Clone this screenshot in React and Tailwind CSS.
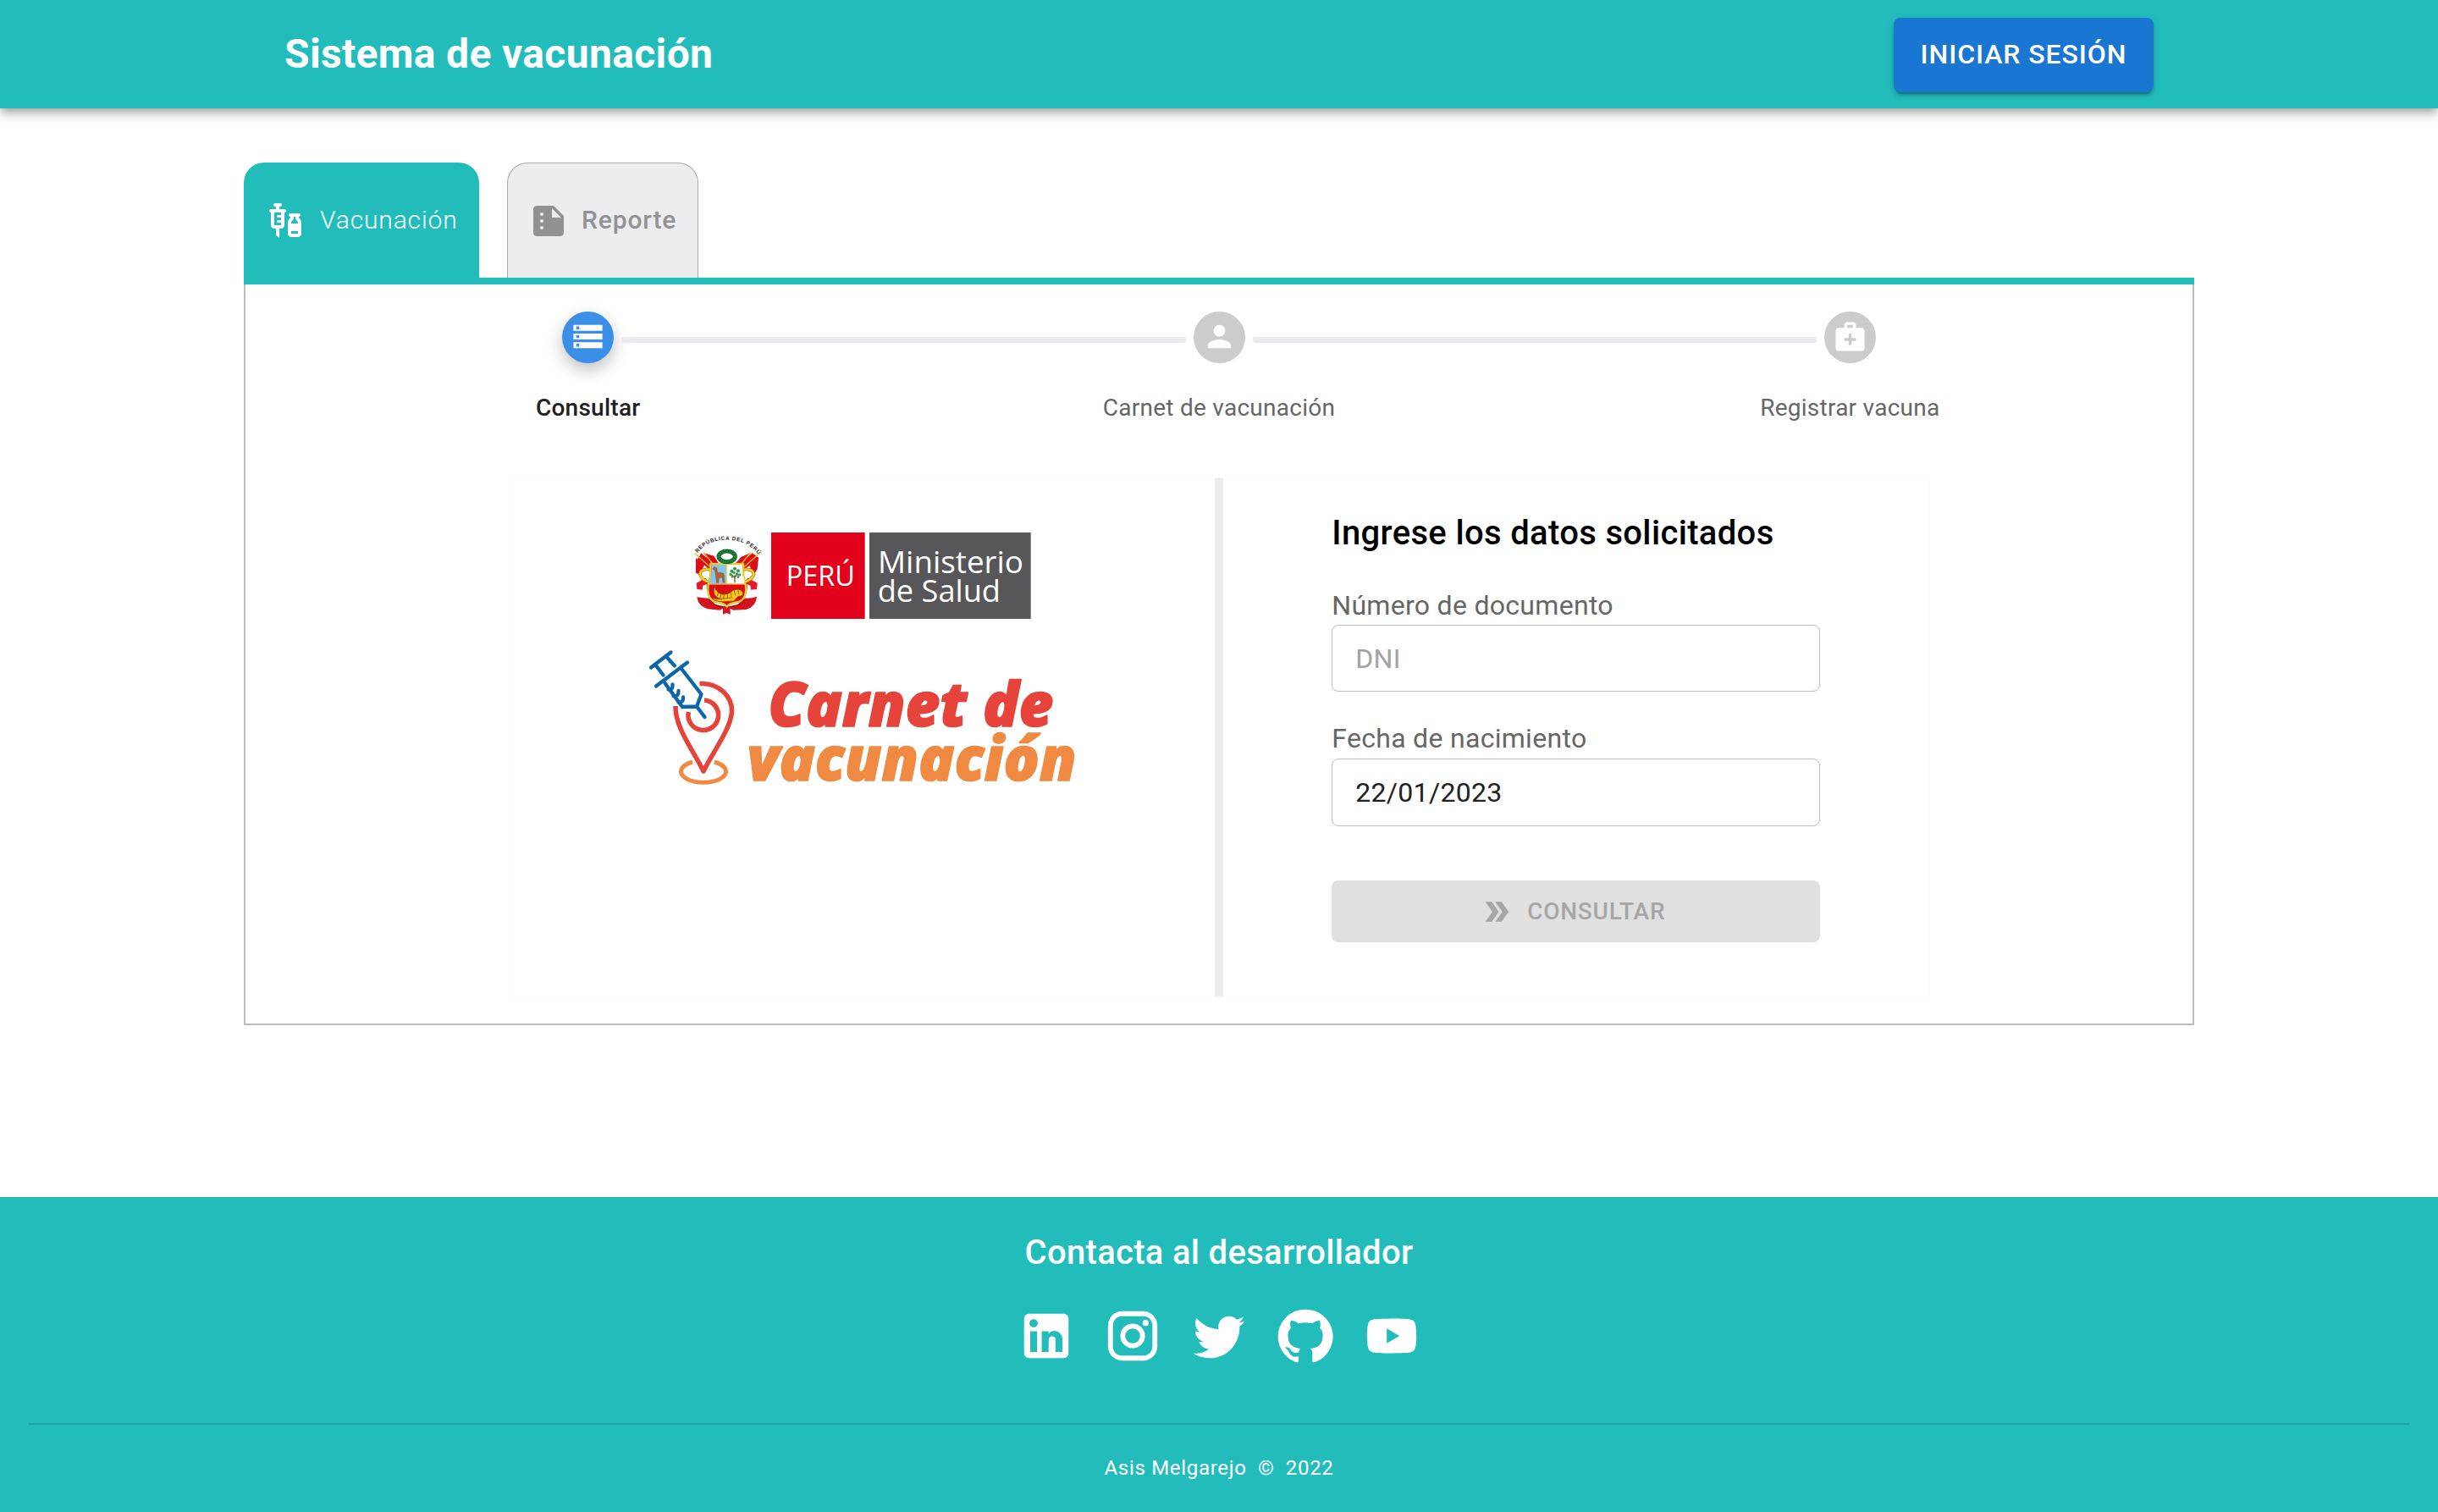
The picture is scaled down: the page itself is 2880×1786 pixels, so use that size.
import React from "react";
import { MdVaccines, MdSummarize, MdStorage, MdPerson, MdMedicalServices, MdDoubleArrow } from "react-icons/md";

const SOCIAL = [
  {
    name: "LinkedIn",
    d: "M19 3a2 2 0 0 1 2 2v14a2 2 0 0 1-2 2H5a2 2 0 0 1-2-2V5a2 2 0 0 1 2-2h14m-.5 15.5v-5.3a3.26 3.26 0 0 0-3.26-3.26c-.85 0-1.84.52-2.32 1.3v-1.11h-2.79v8.37h2.79v-4.93c0-.77.62-1.4 1.39-1.4a1.4 1.4 0 0 1 1.4 1.4v4.93h2.79M6.88 8.56a1.68 1.68 0 0 0 1.68-1.68c0-.93-.75-1.69-1.68-1.69a1.69 1.69 0 0 0-1.69 1.69c0 .93.76 1.68 1.69 1.68m1.39 9.94v-8.37H5.5v8.37h2.77z",
  },
  {
    name: "Instagram",
    d: "M7.8 2h8.4C19.4 2 22 4.6 22 7.8v8.4a5.8 5.8 0 0 1-5.8 5.8H7.8C4.6 22 2 19.4 2 16.2V7.8A5.8 5.8 0 0 1 7.8 2m-.2 2A3.6 3.6 0 0 0 4 7.6v8.8C4 18.39 5.61 20 7.6 20h8.8a3.6 3.6 0 0 0 3.6-3.6V7.6C20 5.61 18.39 4 16.4 4H7.6m9.65 1.5a1.25 1.25 0 0 1 1.25 1.25A1.25 1.25 0 0 1 17.25 8 1.25 1.25 0 0 1 16 6.75a1.25 1.25 0 0 1 1.25-1.25M12 7a5 5 0 0 1 5 5 5 5 0 0 1-5 5 5 5 0 0 1-5-5 5 5 0 0 1 5-5m0 2a3 3 0 0 0-3 3 3 3 0 0 0 3 3 3 3 0 0 0 3-3 3 3 0 0 0-3-3z",
  },
  {
    name: "Twitter",
    d: "M22.46 6c-.77.35-1.6.58-2.46.69.88-.53 1.56-1.37 1.88-2.38-.83.5-1.75.85-2.72 1.05C18.37 4.5 17.26 4 16 4c-2.35 0-4.27 1.92-4.27 4.29 0 .34.04.67.11.98C8.28 9.09 5.11 7.38 3 4.79c-.37.63-.58 1.37-.58 2.15 0 1.49.75 2.81 1.91 3.56-.71 0-1.37-.2-1.95-.5v.03c0 2.08 1.48 3.82 3.44 4.21a4.22 4.22 0 0 1-1.93.07 4.28 4.28 0 0 0 4 2.98 8.521 8.521 0 0 1-5.33 1.84c-.34 0-.68-.02-1.02-.06C3.44 20.29 5.7 21 8.12 21 16 21 20.33 14.46 20.33 8.79c0-.19 0-.37-.01-.56.84-.6 1.56-1.36 2.14-2.23z",
  },
  {
    name: "GitHub",
    d: "M12 1.27a11 11 0 00-3.48 21.46c.55.09.73-.28.73-.55v-1.84c-3.03.64-3.67-1.46-3.67-1.46-.55-1.29-1.28-1.65-1.28-1.65-.92-.65.1-.65.1-.65 1.1 0 1.73 1.1 1.73 1.1.92 1.65 2.57 1.2 3.21.92a2 2 0 01.64-1.47c-2.47-.27-5.04-1.19-5.04-5.5 0-1.1.46-2.1 1.2-2.84a3.76 3.76 0 010-2.93s.91-.28 3.11 1.1c1.8-.49 3.7-.49 5.5 0 2.1-1.38 3.02-1.1 3.02-1.1a3.76 3.76 0 01.1 2.93c.83.74 1.2 1.74 1.2 2.94 0 4.21-2.57 5.13-5.04 5.4.45.37.82.92.82 2.02v3.03c0 .27.1.64.73.55A11 11 0 0012 1.27",
  },
  {
    name: "YouTube",
    d: "M10 15l5.19-3L10 9v6m11.56-7.83c.13.47.22 1.1.28 1.9.07.8.1 1.49.1 2.09L22 12c0 2.19-.16 3.8-.44 4.83-.25.9-.83 1.48-1.73 1.73-.47.13-1.33.22-2.65.28-1.3.07-2.49.1-3.59.1L12 19c-4.19 0-6.8-.16-7.83-.44-.9-.25-1.48-.83-1.73-1.73-.13-.47-.22-1.1-.28-1.9-.07-.8-.1-1.49-.1-2.09L2 12c0-2.19.16-3.8.44-4.83.25-.9.83-1.48 1.73-1.73.47-.13 1.33-.22 2.65-.28 1.3-.07 2.49-.1 3.59-.1L12 5c4.19 0 6.8.16 7.83.44.9.25 1.48.83 1.73 1.73z",
  },
];

const STEPS = [
  { label: "Consultar", Icon: MdStorage, active: true },
  { label: "Carnet de vacunación", Icon: MdPerson },
  { label: "Registrar vacuna", Icon: MdMedicalServices },
];

function Header() {
  return (
    <header className="relative h-[128px] bg-[#22bdbb] shadow-[0_4px_8px_-2px_rgba(0,0,0,0.2),0_8px_10px_rgba(0,0,0,0.14),0_2px_20px_rgba(0,0,0,0.12)]">
      <div className="flex h-full items-center justify-between pl-[336px] pr-[336px]">
        <h1 className="text-[48px] leading-[64px] font-bold tracking-[0.35px] text-white">Sistema de vacunación</h1>
        <button className="mt-[2px] flex h-[88px] w-[307px] items-center justify-center rounded-[8px] bg-[#1976d2] pb-[3px] text-[32px] font-medium tracking-[0.91px] text-white shadow-[0_6px_2px_-4px_rgba(0,0,0,0.2),0_4px_4px_rgba(0,0,0,0.14),0_2px_10px_rgba(0,0,0,0.12)]">
          INICIAR SESIÓN
        </button>
      </div>
    </header>
  );
}

function Tabs() {
  return (
    <div className="flex h-[136px] gap-[33px] text-[30px] tracking-[0.86px]">
      <div className="flex w-[278px] items-center gap-4 rounded-t-[24px] bg-[#22bdbb] pl-[26px] font-light text-white">
        <MdVaccines className="size-12 shrink-0" />
        <span className="pb-[2px]">Vacunación</span>
      </div>
      <div className="flex w-[226px] items-center gap-[15px] rounded-t-[24px] border border-b-0 border-[#a9a9ab] bg-[#ededef] pl-[24px] font-medium text-[#929294]">
        <MdSummarize className="size-12 shrink-0" />
        <span className="pb-[2px]">Reporte</span>
      </div>
    </div>
  );
}

function Stepper() {
  return (
    <div className="mx-auto flex w-[2236px]">
      {STEPS.map(({ label, Icon, active }, i) => (
        <div key={label} className="flex flex-1 flex-col items-center">
          <div className="flex w-full items-center">
            <div className={i === 0 ? "mr-[9px] h-[7px] flex-1" : "mr-[9px] mt-[6px] h-[7px] flex-1 rounded-r-[2px] bg-[#eaeaf0]"} />
            <div
              className={
                active
                  ? "flex size-[61px] items-center justify-center rounded-full bg-[#3b8fe6] pb-[2px] text-white shadow-[0_8px_20px_0_rgba(0,0,0,0.25)]"
                  : "flex size-[61px] items-center justify-center rounded-full bg-[#ccc] pb-[2px] text-white"
              }
            >
              <Icon className="size-[41px]" />
            </div>
            <div className={i === 2 ? "ml-[9px] h-[7px] flex-1" : "ml-[9px] mt-[6px] h-[7px] flex-1 rounded-l-[2px] bg-[#eaeaf0]"} />
          </div>
          <div
            className={
              active
                ? "mt-[33px] text-[28px] leading-[40px] font-medium tracking-[0.26px] text-[#212121]"
                : "mt-[33px] text-[28px] leading-[40px] tracking-[0.26px] text-[#666]"
            }
          >
            {label}
          </div>
        </div>
      ))}
    </div>
  );
}

function Emblem() {
  return (
    <g>
      <path id="emblem-arc" d="M72 130 Q108 82 178 83 Q248 84 284 132" fill="none" />
      <text fontFamily="Liberation Sans" fontWeight="700" fontSize="19" fill="#222">
        <textPath href="#emblem-arc" textLength="246" lengthAdjust="spacing">REPÚBLICA DEL PERÚ</textPath>
      </text>
      {/* flags and drapes */}
      <path d="M84 132 L66 190 L72 300 Q100 334 148 330 L176 300 L204 330 Q256 334 282 300 L284 190 L268 132 L216 182 H140 Z" fill="#fff" stroke="#ddd" strokeWidth="1" />
      <path d="M85 130 L136 176 L116 190 L72 152 Z M266 130 L214 176 L236 190 L290 148 Z" fill="#dd0a1c" />
      <path d="M94 130 L130 140 L150 172 L124 182 Z M258 130 L226 144 L202 172 L230 182 Z" fill="#dd0a1c" />
      <path d="M66 148 L98 168 L80 206 L66 200 Z M288 148 L254 168 L270 210 L284 186 Z" fill="#dd0a1c" />
      <path d="M68 236 L100 218 L114 236 L110 262 L70 258 Z M284 236 L250 218 L238 236 L242 262 L282 258 Z" fill="#e8192a" />
      <path d="M90 246 L104 240 L106 296 L90 290 Z M260 246 L248 240 L246 296 L262 290 Z" fill="#fff" />
      <path d="M70 286 Q96 290 112 290 L136 312 L176 320 L214 312 L240 290 Q260 292 282 284 Q280 318 244 330 L198 332 L188 326 V347 L175 342 L162 347 V326 L152 332 L108 328 Q74 318 70 286Z" fill="#d5121f" />
      <path d="M112 300 Q130 318 170 322 M240 300 Q222 318 182 322" fill="none" stroke="#8e1016" strokeWidth="3" />
      <path d="M64 132 L122 184 M94 128 L126 168 M290 132 L232 184 M260 128 L228 168" stroke="#f4c21a" strokeWidth="4" strokeLinecap="round" />
      <path d="M116 188 Q84 184 80 204 Q84 226 118 234 M236 188 Q266 184 272 204 Q266 226 234 234" fill="none" stroke="#9b7713" strokeWidth="11" strokeLinecap="round" />
      <path d="M116 188 Q84 184 80 204 Q84 226 118 234 M236 188 Q266 184 272 204 Q266 226 234 234" fill="none" stroke="#ffd21c" strokeWidth="7" strokeLinecap="round" />
      {/* shield */}
      <path d="M118 168 H234 V210 Q248 250 241 276 Q235 302 204 305 Q184 308 176 320 Q168 308 148 305 Q117 302 111 276 Q104 250 118 210Z" fill="#df0a17" stroke="#c89a12" strokeWidth="7" />
      <path d="M118 168 H234 V210 Q248 250 241 276 Q235 302 204 305 Q184 308 176 320 Q168 308 148 305 Q117 302 111 276 Q104 250 118 210Z" fill="none" stroke="#ffdd26" strokeWidth="4" />
      <path d="M121 171 H174 V239 H113 Q113 222 121 208Z" fill="#85c7ea" />
      <path d="M177 171 H231 V208 Q238 222 239 239 H177Z" fill="#fff" />
      <path d="M175.500 170 V239 M110 240 H242" stroke="#ffdd26" strokeWidth="3" />
      <path d="M131 179 L140 183 L143 200 Q156 198 165 203 L168 234 L162 234 L160 217 L148 217 L146 235 L140 235 L137 212 L134 192 L126 186Z" fill="#b5652b" stroke="#7a3f16" strokeWidth="1.500" />
      <path d="M204 208 V235 M204 218 L193 206 M204 216 L215 204" stroke="#6b5a25" strokeWidth="4" />
      <g fill="#2e9a4d">
        <circle cx="193" cy="194" r="6" /><circle cx="204" cy="185" r="6" /><circle cx="216" cy="193" r="6" />
        <circle cx="189" cy="206" r="5" /><circle cx="201" cy="199" r="5" /><circle cx="212" cy="204" r="5" />
        <circle cx="221" cy="207" r="5" /><circle cx="195" cy="214" r="4" /><circle cx="216" cy="215" r="4" />
      </g>
      <path d="M133 250 Q140 276 166 277 Q184 276 198 262 Q222 252 233 270 Q234 284 216 283 L200 300 L150 302 Q128 298 124 290 L158 294 Q142 290 134 280 Q126 264 133 250Z" fill="#f6c61c" stroke="#7a4a0c" strokeWidth="2" />
      <path d="M146 268 L142 282 M156 272 L152 290 M167 272 L164 292 M178 268 L178 292 M189 262 L192 286 M201 258 L206 280 M214 256 L219 276 M134 294 L196 288" stroke="#8a570f" strokeWidth="2.500" />
      {/* wreath */}
      <ellipse cx="176" cy="142" rx="29" ry="19" fill="none" stroke="#14612c" strokeWidth="15" />
      <ellipse cx="176" cy="142" rx="29" ry="19" fill="none" stroke="#1c8a3e" strokeWidth="10" strokeDasharray="5 3" />
    </g>
  );
}

function MinistryLogo() {
  return (
    <svg viewBox="57 57 1197 306" className="h-[102px] w-[399px] overflow-visible" role="img">
      <Emblem />
      <rect x="333" y="57" width="332" height="306" fill="#e2001a" />
      <rect x="681" y="57" width="572" height="306" fill="#575759" />
      <g fontFamily="Open Sans, sans-serif" fill="#fff">
        <text x="386" y="247" fontSize="100" textLength="244" lengthAdjust="spacingAndGlyphs">PERÚ</text>
        <text x="711" y="202" fontSize="109" textLength="516" lengthAdjust="spacingAndGlyphs">Ministerio</text>
        <text x="710" y="303" fontSize="109" textLength="436" lengthAdjust="spacingAndGlyphs">de Salud</text>
      </g>
    </svg>
  );
}

function CardLogo() {
  return (
    <svg viewBox="767 768 502 160" className="h-[160px] w-[502px] overflow-visible" role="img">
      <g fill="none" strokeLinecap="round" strokeLinejoin="round">
        <path d="M844 900 A26.500 13 0 1 1 818 900" stroke="#f08a42" strokeWidth="5" strokeLinecap="butt" />
        <path d="M826.500 807.500 C850 806 865.500 824 864.500 841 C863 861 844 885 831 911 C818 885 797 858 798 834" stroke="#e6433a" strokeWidth="5.500" strokeLinecap="butt" />
        <path d="M832 827 A17.800 17.800 0 1 1 813.400 841" stroke="#e6433a" strokeWidth="5.500" strokeLinecap="butt" />
        <g stroke="#0a66a8" strokeWidth="4.300">
          <path d="M769 788.500 L792.500 770.500 M787 775.500 L797 786.500 M774.500 785.500 L783.500 797.500" />
          <path d="M775 810.500 L812 782.500" />
          <path d="M805 790 L828.500 820 L823 834.500 L806 835 L785.500 807 M823 834.500 L832.500 847" />
          <path d="M789.500 814.500 Q795 815.500 794.500 808.500 M795.500 822 Q802 823 801.500 816 M801.500 829.500 Q807.500 830 807 823.500" />
        </g>
      </g>
      <g fontFamily="Open Sans, sans-serif" fontWeight="800" fontStyle="italic" fontSize="73" strokeWidth="1.600" strokeLinejoin="round">
        <text x="907.500" y="857.800" fill="#e6433a" stroke="#e6433a" textLength="337" lengthAdjust="spacingAndGlyphs">Carnet de</text>
        <text x="882.400" y="922.200" fill="#f08a42" stroke="#f08a42" textLength="389" lengthAdjust="spacingAndGlyphs">vacunación</text>
      </g>
    </svg>
  );
}

function Form() {
  return (
    <form className="flex w-[577px] flex-col pt-[41px]">
      <h2 className="text-[40px] leading-[48px] font-medium tracking-[0.34px] text-black">Ingrese los datos solicitados</h2>
      <label className="mt-[41px] text-[32px] leading-[40px] tracking-[0.3px] text-[#666]">Número de documento</label>
      <input
        placeholder="DNI"
        className="mt-[3px] h-[79px] rounded-[8px] border border-[#bdbdbd] bg-white px-[27px] text-[32px] tracking-[0.3px] text-[#212121] placeholder:text-[#a3a3a3]"
      />
      <label className="mt-[35px] text-[32px] leading-[40px] tracking-[0.3px] text-[#666]">Fecha de nacimiento</label>
      <input
        readOnly
        value="22/01/2023"
        className="mt-[4px] h-[80px] rounded-[8px] border border-[#bdbdbd] bg-white px-[27px] pb-px text-[32px] tracking-[0.3px] text-[#212121]"
      />
      <button
        type="button"
        disabled
        className="mt-[64px] flex h-[73px] items-center justify-center rounded-[8px] bg-[#e0e0e0] text-[28px] font-medium tracking-[0.75px] text-[#a6a6a6]"
      >
        <MdDoubleArrow className="-ml-2 mr-4 size-[40px]" />
        CONSULTAR
      </button>
    </form>
  );
}

function Footer() {
  return (
    <footer className="flex h-[372px] flex-col items-center bg-[#22bdbb] px-[33px] pt-[42px] text-white">
      <h2 className="text-[40px] leading-[48px] font-medium tracking-[0.3px]">Contacta al desarrollador</h2>
      <div className="mt-[39px] flex gap-[32px]">
        {SOCIAL.map((s) => (
          <svg key={s.name} viewBox="0 0 24 24" className="size-[70px] fill-white" aria-label={s.name}>
            <path d={s.d} />
          </svg>
        ))}
      </div>
      <div className="mt-[68px] h-[2px] w-full bg-black/12" />
      <p className="mt-[33px] whitespace-pre text-[24px] leading-[36px] tracking-[0.7px]">{"Asis Melgarejo  ©  2022"}</p>
    </footer>
  );
}

export default function App() {
  return (
    <div className="flex h-[1786px] w-[2880px] flex-col bg-white font-[Roboto,sans-serif]">
      <Header />
      <main className="mx-[288px] mt-[64px] flex-1">
        <Tabs />
        <div className="h-[8px] bg-[#22bdbb]" />
        <section className="h-[875px] border-2 border-t-0 border-[#bcbcbc] pt-[32px]">
          <Stepper />
          <div className="mx-auto mt-[62px] flex h-[614px] w-[1679px] border border-[#fcfcfc]">
            <div className="flex flex-1 flex-col items-center pt-[64px]">
              <MinistryLogo />
              <div className="mt-[37px]">
                <CardLogo />
              </div>
            </div>
            <div className="w-[10px] bg-[#ededf0]" />
            <div className="flex flex-1 justify-center">
              <Form />
            </div>
          </div>
        </section>
      </main>
      <Footer />
    </div>
  );
}
